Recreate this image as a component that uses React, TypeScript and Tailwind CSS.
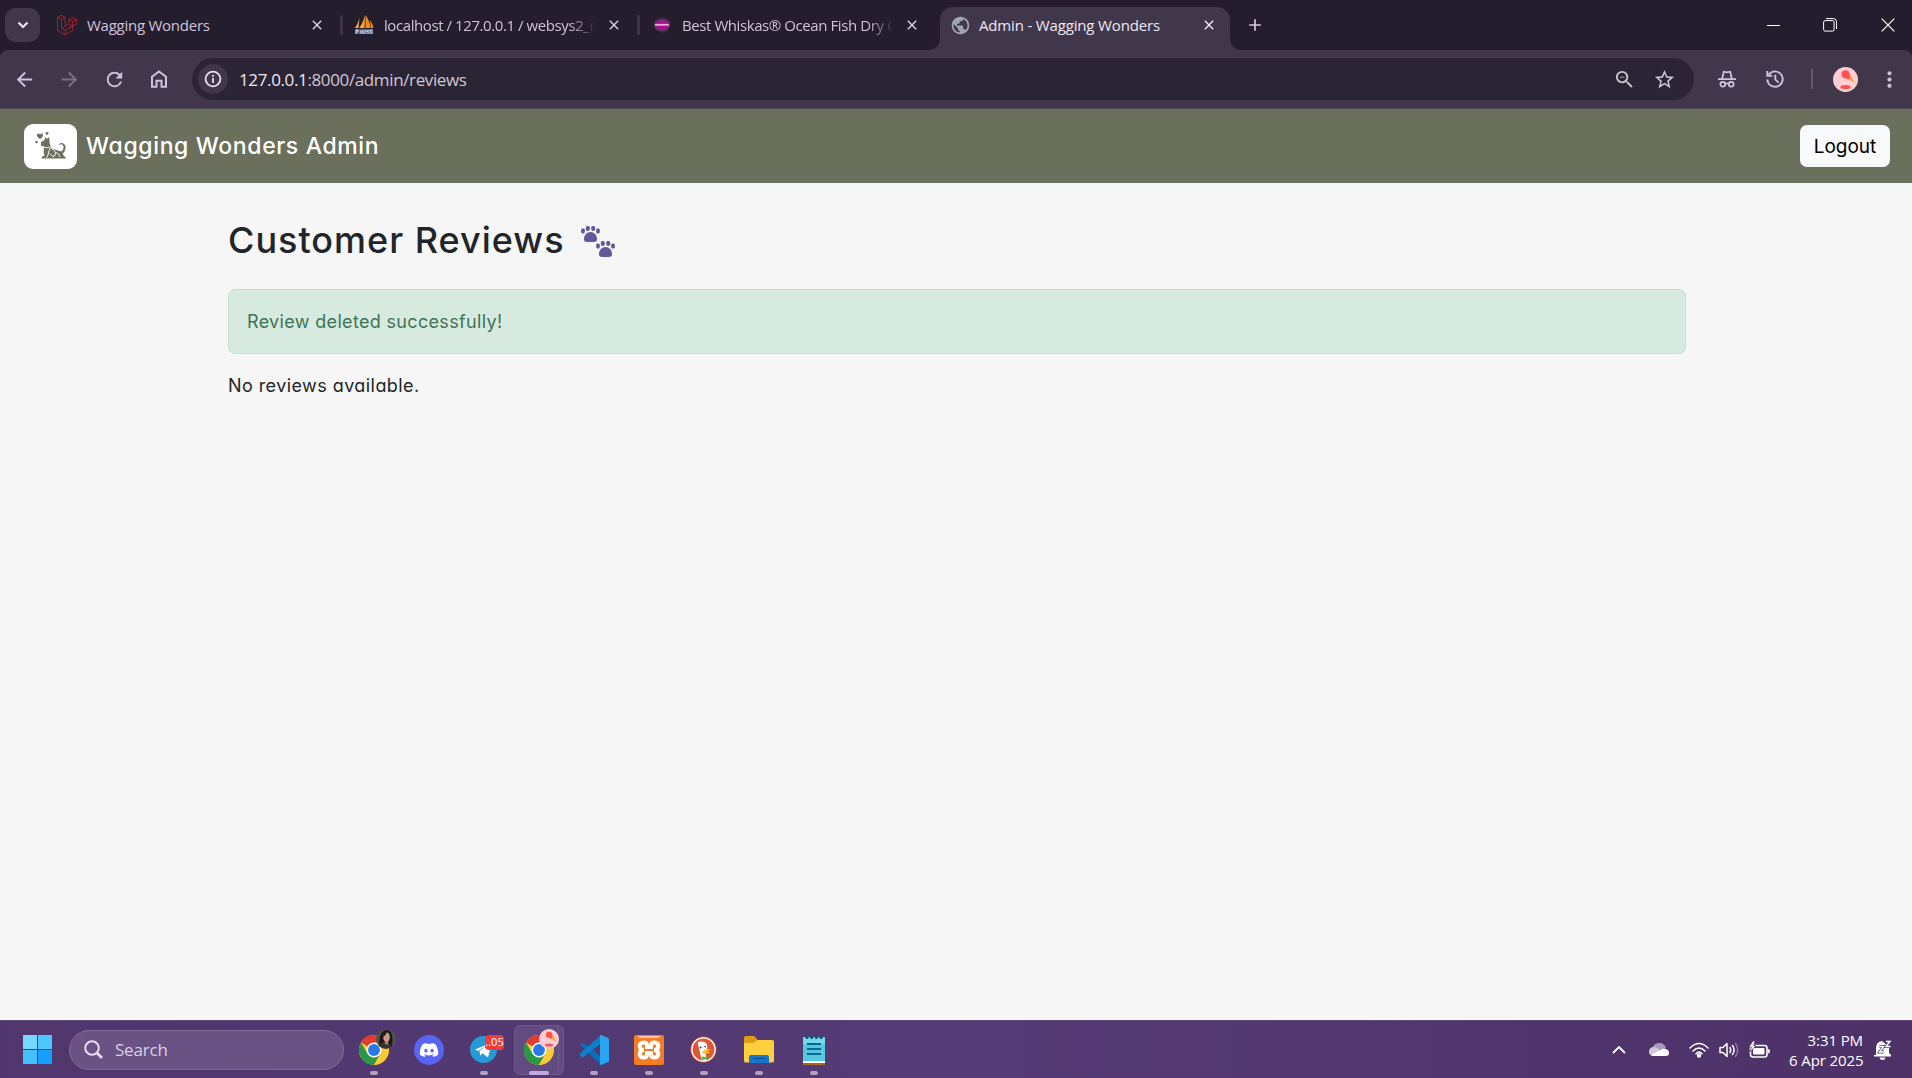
import React from "react";
import { SiLaravel } from "react-icons/si";
import { FaDiscord } from "react-icons/fa";
import { MdArrowBack, MdArrowForward, MdRefresh, MdStarBorder, MdZoomOut, MdPublic, MdAdd, MdClose, MdMoreVert } from "react-icons/md";

type SvgProps = { className?: string };

const HomeIcon = ({ className }: SvgProps) => (
  <svg viewBox="0 0 16 18" className={className} fill="none" stroke="currentColor" strokeWidth="2">
    <path d="M1 16.8V6.8L8 1.4l7 5.4v10h-4.500v-6h-5v6z" />
  </svg>
);

const InfoIcon = ({ className }: SvgProps) => (
  <svg viewBox="0 0 18 18" className={className} fill="none" stroke="currentColor" strokeWidth="1.8">
    <circle cx="9" cy="9" r="7.4" />
    <path d="M9 8v5M9 5v1.8" />
  </svg>
);

const IncognitoIcon = ({ className }: SvgProps) => (
  <svg viewBox="0 0 18 18" className={className} fill="none" stroke="currentColor" strokeWidth="1.8">
    <path d="M4.200 8.500 5.800 1.700 9 2.300l3.200-.6 1.600 6.800M0 9.200h18" />
    <circle cx="4.800" cy="14.200" r="2.400" />
    <circle cx="13.200" cy="14.200" r="2.400" />
    <path d="M7 13.800q2-1 4 0" />
  </svg>
);

const HistoryIcon = ({ className }: SvgProps) => (
  <svg viewBox="0 0 18 18" className={className} fill="none" stroke="currentColor" strokeWidth="1.900">
    <path d="M1.300 9.500a7.700 7.700 0 1 0 1.500-5M1.300 1v4.800h5M9.300 4.800v4.600l3.200 3.200" />
  </svg>
);

const MyAdminIcon = ({ className }: SvgProps) => (
  <svg viewBox="0 0 20 20" className={className}>
    <path d="M5.500 3 4.500 13H0.800Q4 9 5.500 3zM11 0 10.500 13H5.200Q9 8 11 0z" fill="#f3a748" />
    <path d="M11.500 0Q16 6 16.500 13H11.500zM16 5q3 4 3.500 8h-2.500z" fill="#f58a16" />
    <path d="M1 14h18v5H1z" fill="#56618c" />
    <path d="M2 19v-4h2v2H2M7 19v-4M7 17h2M9 15v4M11 19v-4l2 2 1-2v4M16 19v-4h2v4" stroke="#c8cbdc" fill="none" />
  </svg>
);

const WhiskasIcon = ({ className }: SvgProps) => (
  <svg viewBox="0 0 20 20" className={className}>
    <ellipse cx="10" cy="10" rx="9" ry="7.800" fill="#332a38" />
    <ellipse cx="10" cy="10" rx="7.800" ry="6.500" fill="#4f3350" />
    <ellipse cx="10" cy="10" rx="7" ry="5.200" fill="#9c168c" />
    <path d="M3 9.800h14" stroke="#eda9df" strokeWidth="1.800" />
  </svg>
);

const DogIcon = ({ className }: SvgProps) => (
  <svg viewBox="0 0 62 56" className={className} fill="#6b705c">
    <path d="M10 14C2 9 3 3 7 3q3 0 3 3 0-3 3-3c4 0 5 6-3 11zM24 6c-4-2.500-3.500-6-1.500-6Q24 0 24 1.500 24 0 25.500 0c2 0 2.500 3.500-1.500 6zM3 23c-4-3-3-5-1.500-5Q3 18 3 19q0-1 1.500-1C6 18 7 20 3 23z" />
    <path d="M12 23q-1-3 2-4l4-2 3-7 3 4 4-4q2 7 1 12l3 8q2 4 8 5 7 2 12 4 6-4 5-10-2-7-9-3 1-5 6-4 8 2 7 11-1 7-6 10l3 5q4 2 4 5H13q-1-3 3-5l3-1q-3-8-1-15l1-4q-5 1-7-1z" />
    <path d="M19 31q6 2 12-2M31 31q-4 7-5 15l-3 6M31 32q10 4 10 10 0 6-4 7M42 41q6 1 8 9M29 43q3 4 9 6" fill="none" stroke="#fff" strokeWidth="1.800" />
  </svg>
);

const Paw = ({ className }: SvgProps) => (
  <svg viewBox="0 0 19 16" className={className} fill="#64589b">
    <ellipse cx="2" cy="5" rx="2" ry="2.700" />
    <ellipse cx="6.800" cy="2.500" rx="2.100" ry="2.600" />
    <ellipse cx="12.200" cy="2.500" rx="2.100" ry="2.600" />
    <ellipse cx="17" cy="5" rx="2" ry="2.700" />
    <path d="M3 13c0-4 3-7 6.500-7s6.500 3 6.500 7c0 3-1.500 3-6.500 3S3 16 3 13z" />
  </svg>
);

const ProfileIcon = ({ className }: SvgProps) => (
  <svg viewBox="0 0 25 25" className={className}>
    <circle cx="12.500" cy="12.500" r="12.500" fill="#ffcdd2" />
    <path d="M13 10.500 16.500 6.500 22 16.500z" fill="#ffa53a" />
    <circle cx="12.500" cy="7.300" r="4" fill="#ff5252" />
    <path d="m12 11 4.500-5v5l-1 1.500z" fill="#ff5252" />
    <ellipse cx="12.500" cy="20" rx="5.200" ry="2" fill="#ff5252" />
  </svg>
);

const ChromeIcon = ({ className }: SvgProps) => (
  <svg viewBox="0 0 48 48" className={className}>
    <circle cx="24" cy="24" r="24" fill="#fcc934" />
    <path d="M24 24 3.200 12A24 24 0 0 1 44.800 12H24z" fill="#e33b2e" />
    <path d="M3.200 12A24 24 0 0 0 24 48l10.400-18L24 24l-10.400 6z" fill="#279847" />
    <path d="M24 13h20.800A24 24 0 0 1 24 48l10.400-18z" fill="#fcc934" />
    <circle cx="24" cy="24" r="12" fill="#fff" />
    <circle cx="24" cy="24" r="9.500" fill="#2878e8" />
  </svg>
);

const PortraitIcon = ({ className }: SvgProps) => (
  <svg viewBox="0 0 20 20" className={className}>
    <circle cx="10" cy="10" r="10" fill="#4d5548" />
    <path d="M4 18C2 10 5 1 10.500 1c6.500 0 6.500 9 5.500 17z" fill="#1d1718" />
    <path d="M3 17q2-4 5-4l3 1q4 1 5 3-6 5-13 0z" fill="#3a3031" />
    <path d="M8.500 11h4l-.5 5-3-1z" fill="#b07b69" />
    <ellipse cx="10.500" cy="8" rx="3.300" ry="4.500" fill="#cc9a88" />
    <path d="M7 8q0-5 4-5-1 3-4 5z" fill="#1d1718" />
  </svg>
);

const TelegramIcon = ({ className }: SvgProps) => (
  <svg viewBox="0 0 28 28" className={className}>
    <circle cx="14" cy="14" r="14" fill="#249bd7" />
    <path d="m5 14 16-6.500c1-.3 1.300.3 1 1.500L19 21c-.3 1-.8 1-1.500.5L13 18l-2.500 2.500-.5-5 8-6-9.500 6z" fill="#fff" />
  </svg>
);

const VsCodeIcon = ({ className }: SvgProps) => (
  <svg viewBox="0 0 30 30" className={className}>
    <path d="M1 9.500 3.500 8Q4 8 5 8.800L29 27l-7 3z" fill="#0872b8" />
    <path d="m1 20.500 2.500 2Q4 22.500 5 21.500L29 3l-7-3L1 18.500q-.8 1 0 2z" fill="#0d80cc" />
    <path d="m22 0 7 3q1 .5 1 1.500v21q0 1-1 1.500l-7 3q-1-.2-1-1V1q0-.8 1-1z" fill="#2aa5f2" />
  </svg>
);

const XamppIcon = ({ className }: SvgProps) => (
  <svg viewBox="0 0 30 30" className={className}>
    <rect width="30" height="30" rx="2" fill="#f47c24" />
    <path d="M4 1h22l-1 2H5z" fill="#ffc398" />
    <path d="M9.500 15C4.500 14 4.500 7.500 9.500 7.500q3.500 0 3.500 3v1.500h4v-1.500q0-3 3.500-3c5 0 5 6.500 0 7.500 5 1 5 7.500 0 7.500q-3.500 0-3.500-3v-1.500h-4v1.500q0 3-3.500 3c-5 0-5-6.500 0-7.500z" fill="none" stroke="#fff" strokeWidth="4" />
  </svg>
);

const DuckIcon = ({ className }: SvgProps) => (
  <svg viewBox="0 0 28 28" className={className}>
    <circle cx="14" cy="14" r="13.500" fill="#de5833" />
    <circle cx="14" cy="14" r="12" fill="none" stroke="#fff" strokeWidth="1.400" />
    <path d="M8 7q2-2 6-1 4 1 4 6l-2 5 1 8.500q-3 .5-5-1z" fill="#fff" />
    <circle cx="11" cy="12" r="1" fill="#29486c" />
    <circle cx="15.800" cy="11" r=".9" fill="#29486c" />
    <path d="M13 16q4-3 9-2l-4 2 3 1q-4 2-8 1z" fill="#fdbb24" />
    <path d="m12 21 4 1 3-1v4l-3-1-4 1z" fill="#4cba3c" />
  </svg>
);

const FolderIcon = ({ className }: SvgProps) => (
  <svg viewBox="0 0 30 27" className={className}>
    <path d="M0 2q0-2 2-2h8l3 3v8H0z" fill="#dd9e14" />
    <path d="M0 7h9q2 0 4-3h15q2 0 2 2v19q0 1.500-2 1.500H2Q0 26.500 0 25z" fill="#ffce3d" />
    <path d="M5 27v-6q0-2 2-2h16q2 0 2 2v6z" fill="#1377cf" />
    <path d="M9 22.500h12" stroke="#06498b" />
  </svg>
);

const NotepadIcon = ({ className }: SvgProps) => (
  <svg viewBox="0 0 22 30" className={className}>
    <rect y="2" width="22" height="25" fill="#57c6df" />
    <path d="M0 3h22v6H0z" fill="#75d9ec" />
    <path d="M0 26h22v2H0z" fill="#fff" />
    <path d="M0 28h22v2H0z" fill="#ad6428" />
    <path d="M4 9h14M4 14h14M4 19h14" stroke="#08678e" strokeWidth="2" />
    <path d="M4 1.500v1M8.700 1.500v1M13.400 1.500v1M18 1.500v1" stroke="#075879" strokeWidth="3" strokeLinecap="round" />
  </svg>
);

const OneDriveIcon = ({ className }: SvgProps) => (
  <svg viewBox="0 0 20 14" className={className}>
    <path d="M3 9C3 3 6 0 10 0s6 2 7 5z" fill="#a69abb" />
    <path d="M0 9q0-5 5-5 3 0 8 5l-9 4Q0 12 0 9z" fill="#cec6d8" />
    <path d="M2 12 13 6q2-1 4 0 3 1 3 4 0 3-3 3H5q-2 0-3-1z" fill="#fff" />
  </svg>
);

const WifiIcon = ({ className }: SvgProps) => (
  <svg viewBox="0 0 20 16" className={className} fill="none" stroke="currentColor" strokeWidth="1.600" strokeLinecap="round">
    <path d="M1 6q9-9 18 0M4 9q6-6 12 0M7 11.700q3-3 6 0" />
    <circle cx="10" cy="13.500" r="1.400" fill="currentColor" />
  </svg>
);

const VolumeIcon = ({ className }: SvgProps) => (
  <svg viewBox="0 0 20 16" className={className} fill="none" stroke="currentColor" strokeWidth="1.500" strokeLinejoin="round" strokeLinecap="round">
    <path d="M1 5.500h3l4-4v13l-4-4H1zM11 5.500q1.500 2.500 0 5M13.500 3.500q3.300 4.500 0 9" />
    <path d="M16.500 1.500q4.500 6.500 0 13" opacity=".35" />
  </svg>
);

const BatteryIcon = ({ className }: SvgProps) => (
  <svg viewBox="0 0 21 17" className={className}>
    <rect x="1.500" y="4.500" width="16.500" height="11.500" rx="2.500" fill="none" stroke="#fff" strokeWidth="1.600" />
    <rect x="4" y="7" width="11.500" height="6.600" rx="1" fill="#fff" />
    <path d="M19 8q2 0 2 2.300T19 12.600z" fill="#fff" />
    <path d="m4 0-4 6h2.500L1 11l6-6.500H4.500L6 0z" fill="#fff" stroke="#5a427b" strokeWidth=".7" />
  </svg>
);

const BellIcon = ({ className }: SvgProps) => (
  <svg viewBox="0 0 18 20" className={className} fill="#fff">
    <path d="M2 15V8q0-6 6-7l7 6v6l2 2v1.500H0V15zM5.500 17.500h6Q11 20 8.500 20t-3-2.500z" />
    <path d="M5.500 6.500h4L5.500 12h4.500M12 1.500h4L12 6.500h4.500" fill="none" stroke="#58407b" strokeWidth="2.800" />
    <path d="M5.500 6.500h4L5.500 12h4.500M12 1.500h4L12 6.500h4.500" fill="none" stroke="#fff" strokeWidth="1.300" />
  </svg>
);

const Divider = () => <div className="h-5 w-[3px] shrink-0 rounded bg-[#3f354a]" />;

function Tab({ icon, label, labelClass }: { icon: React.ReactNode; label: string; labelClass: string }) {
  return (
    <div className="flex h-[50px] w-[294px] shrink-0 items-center">
      {icon}
      <div className={`ml-[10px] w-[210px] overflow-hidden whitespace-nowrap text-[#cfc4da] ${labelClass}`}>{label}</div>
      <MdClose className="ml-[12px] size-4 text-[#e0d7e8]" />
    </div>
  );
}

function TaskItem({ children, running = true }: { children: React.ReactNode; running?: boolean }) {
  return (
    <div className="relative flex h-[58px] w-[55px] shrink-0 items-center justify-center">
      {children}
      {running && <div className="absolute bottom-[4px] h-1 w-2 rounded-full bg-[#afa2bf]" />}
    </div>
  );
}

const fade = "tracking-[-0.42px] [mask-image:linear-gradient(to_right,black_185px,transparent_212px)]";
const brandFont = "font-['Inter',sans-serif] [font-feature-settings:'cv11','ss03']";

export default function App() {
  return (
    <div className="flex h-[1078px] w-[1912px] flex-col overflow-hidden bg-[#f6f6f6]">
      <header className="shrink-0 bg-[#241d2e] font-['Open_Sans',sans-serif]">
        <div className="flex h-[50px] items-center text-[15px] tracking-[-0.16px]">
          <div className="ml-[5px] flex h-[34px] w-[35px] items-center justify-center rounded-[11px] bg-[#40374b]">
            <svg viewBox="0 0 12 8" className="h-2 w-3" fill="none" stroke="#eee5f3" strokeWidth="2.200"><path d="m1.500 1.500 4.500 4.500 4.500-4.500" /></svg>
          </div>
          <div className="ml-[17px] flex">
            <Tab icon={<SiLaravel className="size-5 shrink-0 text-[#cc2927]" />} label="Wagging Wonders" labelClass="tracking-[-0.25px]" />
          </div>
          <div className="-ml-[11px]"><Divider /></div>
          <div className="ml-[11px] flex">
            <Tab icon={<MyAdminIcon className="size-5 shrink-0" />} label="localhost / 127.0.0.1 / websys2_r" labelClass={fade} />
          </div>
          <div className="-ml-[11px]"><Divider /></div>
          <div className="ml-[12px] flex">
            <Tab icon={<WhiskasIcon className="size-5 shrink-0" />} label="Best Whiskas® Ocean Fish Dry C" labelClass={fade} />
          </div>
          <div className="relative -ml-[6px] mt-[7px] flex h-[43px] w-[290px] shrink-0 items-center rounded-t-[13px] bg-[#40374b] pb-[7px]">
            <svg viewBox="0 0 13 13" className="absolute bottom-0 -left-[13px] size-[13px]" fill="#40374b"><path d="M13 0v13H0Q13 13 13 0z" /></svg>
            <svg viewBox="0 0 13 13" className="absolute bottom-0 -right-[13px] size-[13px]" fill="#40374b"><path d="M0 0v13h13Q0 13 0 0z" /></svg>
            <MdPublic className="ml-[10px] size-[21px] text-[#a1a5ac]" />
            <span className="ml-[8px] w-[212px] whitespace-nowrap text-[#eee6f2]">Admin - Wagging Wonders</span>
            <MdClose className="ml-[10px] size-4 text-[#f4ecf8]" />
          </div>
          <MdAdd className="ml-[15px] size-[20px] text-[#d5c9e1]" />
          <div className="mr-[17px] ml-auto flex items-center text-white">
            <div className="h-px w-[13px] bg-white" />
            <svg viewBox="0 0 14 14" className="ml-[43px] size-[14px]" fill="none" stroke="currentColor"><rect x=".6" y="2.600" width="10.500" height="10.500" rx="1.500" /><path d="M3 .6h7.500q3 0 3 3V11" /></svg>
            <svg viewBox="0 0 14 14" className="ml-[44px] size-[14px]" fill="none" stroke="currentColor" strokeWidth="1.200"><path d="m.7.7 12.600 12.600m0-12.600L.7 13.300" /></svg>
          </div>
        </div>
        <div className="flex h-[59px] items-center rounded-t-[8px] border-b border-[#514858] bg-[#40374b] text-[#cec1dc]">
          <MdArrowBack className="ml-[13px] size-[23px]" />
          <MdArrowForward className="ml-[22px] size-[23px] text-[#7b7185]" />
          <MdRefresh className="ml-[22px] size-[23px]" />
          <HomeIcon className="ml-[25px] h-[18px] w-4" />
          <div className="ml-[25px] flex h-[42px] w-[1502px] items-center rounded-full bg-[#2b2434]">
            <div className="ml-[6px] flex size-[30px] items-center justify-center rounded-full bg-[#40374b]"><InfoIcon className="size-[18px] text-[#e6dfeb]" /></div>
            <div className="mt-px ml-[11px] text-[17px] tracking-[-0.37px] whitespace-nowrap text-[#cfc7d4]"><span className="text-[#eee8f2]">127.0.0.1</span>:8000/admin/reviews</div>
            <MdZoomOut className="ml-auto size-[23px] text-[#c9c3cb]" />
            <MdStarBorder className="mr-[18px] ml-[17px] size-[23px] text-[#cec8d0]" />
          </div>
          <IncognitoIcon className="ml-[24px] size-[18px]" />
          <HistoryIcon className="ml-[30px] size-[18px]" />
          <div className="ml-[27px] h-5 w-[2px] bg-[#62566e]" />
          <ProfileIcon className="ml-[20px] size-[25px]" />
          <MdMoreVert className="ml-[19px] size-[25px]" />
        </div>
      </header>

      <nav className={`flex h-[74px] shrink-0 items-center bg-[#6b705c] pr-[22px] pl-6 ${brandFont}`}>
        <div className="flex h-[45px] w-[53px] items-center justify-center rounded-[9px] bg-white"><DogIcon className="h-[28px] w-[31px]" /></div>
        <span className="ml-[9px] text-[23px] font-medium tracking-[0.64px] whitespace-nowrap text-white">Wagging Wonders Admin</span>
        <button className="ml-auto h-[42px] w-[90px] rounded-[7px] bg-[#f8f9fa] pt-[2px] text-[19px] text-black">Logout</button>
      </nav>

      <main className={`ml-[228px] w-[1458px] grow text-[#212529] ${brandFont}`}>
        <h1 className="mt-[33px] flex h-[48px] items-center text-[36px] font-medium tracking-[1px] whitespace-nowrap">
          Customer Reviews
          <span className="mt-[3px] ml-[16px] flex w-[36px] flex-col">
            <Paw className="h-4 w-[19px]" />
            <Paw className="-mt-px ml-[15px] h-4 w-[19px]" />
          </span>
        </h1>
        <div className="mt-[25px] flex h-[65px] items-center rounded-[7px] border border-[#c3e2d0] bg-[#d6eadf] pl-[18px] text-[18px] tracking-[0.33px] text-[#3f7355]">Review deleted successfully!</div>
        <p className="mt-[18px] text-[18px] leading-7 tracking-[0.43px]">No reviews available.</p>
      </main>

      <footer className="flex h-[58px] shrink-0 items-center border-t border-[#60497a] bg-linear-to-r from-[#50366d] via-[#553b75] to-[#4d3167] font-['Open_Sans',sans-serif] text-white">
        <div className="ml-[23px] grid size-[29px] grid-cols-2 gap-px">
          <div className="bg-[#76d8ff]" /><div className="bg-[#4bc9ff]" /><div className="bg-[#43c2ff]" /><div className="bg-[#169fff]" />
        </div>
        <div className="ml-[17px] flex h-[40px] w-[275px] items-center rounded-full border border-[#806b94] bg-[#6a5384]">
          <svg viewBox="0 0 19 19" className="ml-[14px] size-[19px]" fill="none" stroke="#e6dfec" strokeWidth="2"><circle cx="8" cy="8" r="6.800" /><path d="m13 13 5 5" strokeWidth="2.600" /></svg>
          <span className="mt-px ml-[12px] text-[17px] tracking-[-0.2px] text-[#d9d0e1]">Search</span>
        </div>
        <div className="ml-[2px] flex">
          <TaskItem><ChromeIcon className="size-[30px]" /><PortraitIcon className="absolute top-[8px] right-[5px] size-[20px]" /></TaskItem>
          <TaskItem running={false}><div className="flex size-[30px] items-center justify-center rounded-full bg-[#5865f2]"><FaDiscord className="size-[20px]" /></div></TaskItem>
          <TaskItem><TelegramIcon className="size-[27px]" /><span className="absolute top-[14px] right-[7px] flex h-[15px] w-[19px] items-center justify-center rounded-[4px] bg-[#ee3e3e] text-[11px]">..05</span></TaskItem>
          <div className="relative flex h-[58px] w-[55px] items-center justify-center">
            <div className="absolute top-[4px] left-[3px] h-[50px] w-[50px] rounded-[6px] border border-[#6f5b89] bg-[#624b80]" />
            <div className="absolute top-[4px] left-[3px] h-[50px] w-[45px] rounded-[6px] border-r border-[#6f5b89]" />
            <ChromeIcon className="relative size-[30px]" /><ProfileIcon className="absolute top-[8px] right-[7px] size-[20px]" />
            <div className="absolute bottom-[4px] h-1 w-5 rounded-full bg-[#c3a8df]" />
          </div>
          <TaskItem><VsCodeIcon className="size-[30px]" /></TaskItem>
          <TaskItem><XamppIcon className="size-[30px]" /></TaskItem>
          <TaskItem><DuckIcon className="size-[27px]" /></TaskItem>
          <TaskItem><FolderIcon className="h-[27px] w-[30px]" /></TaskItem>
          <TaskItem><NotepadIcon className="h-[30px] w-[22px]" /></TaskItem>
        </div>
        <div className="mr-[20px] ml-auto flex items-center">
          <svg viewBox="0 0 14 9" className="h-[9px] w-[14px]" fill="none" stroke="#fff" strokeWidth="1.800"><path d="m1 8 6-6 6 6" /></svg>
          <OneDriveIcon className="ml-[23px] h-[14px] w-5" />
          <WifiIcon className="ml-[20px] h-4 w-5" />
          <VolumeIcon className="ml-[10px] h-4 w-5" />
          <BatteryIcon className="ml-[10px] h-[17px] w-[21px]" />
          <div className="ml-[19px] w-[74px] text-right text-[15px] leading-5 tracking-[-0.1px] whitespace-nowrap">3:31 PM<br />6 Apr 2025</div>
          <BellIcon className="ml-[11px] h-5 w-[18px]" />
        </div>
      </footer>
    </div>
  );
}
